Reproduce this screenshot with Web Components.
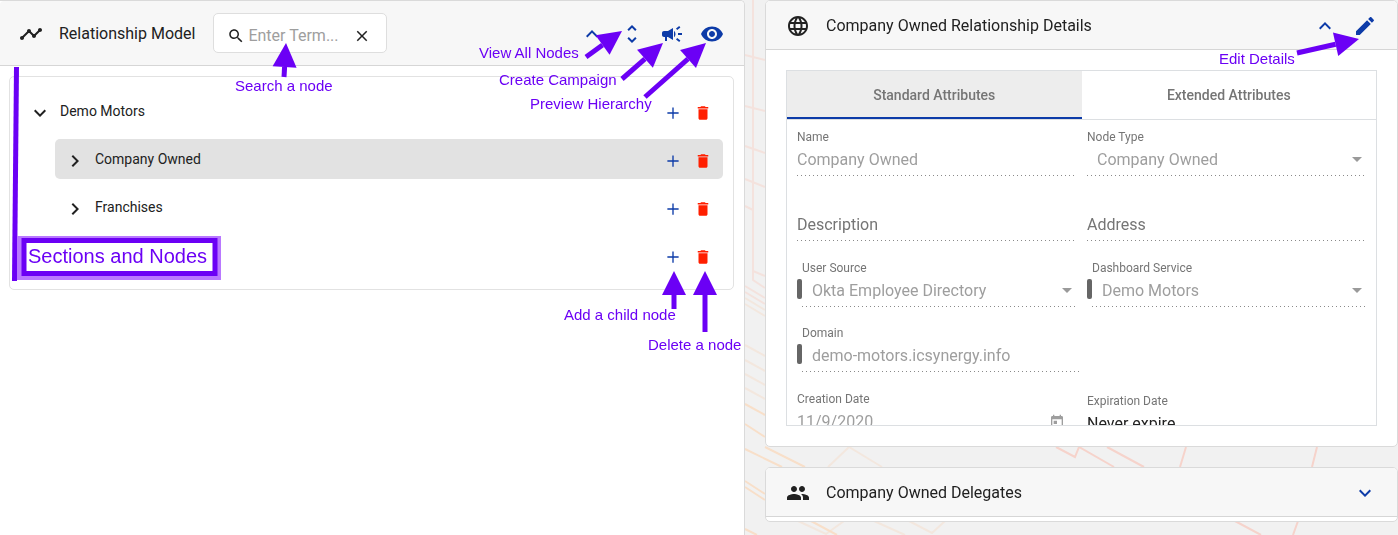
<!DOCTYPE html>
<html lang="en">
<head>
<meta charset="utf-8">
<meta name="viewport" content="width=device-width, initial-scale=1">
<title>Relationship Model</title>
<style>
  html { background: #f1f1f1; }
  body { margin: 0; font-family: Roboto, "Liberation Sans", sans-serif; font-size: 16px; color: #212121; }
</style>
</head>
<body>
<relationship-app></relationship-app>

<script>
const ICONS = {
  timeline: 'M23 8c0 1.1-.9 2-2 2-.18 0-.35-.02-.51-.07l-3.56 3.55c.05.16.07.34.07.52 0 1.1-.9 2-2 2s-2-.9-2-2c0-.18.02-.36.07-.52l-2.55-2.55c-.16.05-.34.07-.52.07s-.36-.02-.52-.07l-4.55 4.56c.05.16.07.33.07.51 0 1.1-.9 2-2 2s-2-.9-2-2 .9-2 2-2c.18 0 .35.02.51.07l4.56-4.55C8.02 9.36 8 9.18 8 9c0-1.1.9-2 2-2s2 .9 2 2c0 .18-.02.36-.07.52l2.55 2.55c.16-.05.34-.07.52-.07s.36.02.52.07l3.55-3.56C19.02 8.35 19 8.18 19 8c0-1.1.9-2 2-2s2 .9 2 2z',
  search: 'M15.5 14h-.79l-.28-.27C15.41 12.59 16 11.11 16 9.5 16 5.91 13.09 3 9.5 3S3 5.91 3 9.5 5.91 16 9.5 16c1.61 0 3.09-.59 4.23-1.57l.27.28v.79l5 4.99L20.49 19l-4.99-5zm-6 0C7.01 14 5 11.99 5 9.5S7.01 5 9.5 5 14 7.01 14 9.5 11.99 14 9.5 14z',
  close: 'M19 6.41L17.59 5 12 10.59 6.41 5 5 6.41 10.59 12 5 17.59 6.41 19 12 13.41 17.59 19 19 17.59 13.41 12z',
  up: 'M12 8l-6 6 1.41 1.41L12 10.83l4.59 4.58L18 14z',
  down: 'M16.59 8.59L12 13.17 7.41 8.59 6 10l6 6 6-6z',
  right: 'M10 6L8.59 7.41 13.17 12l-4.58 4.59L10 18l6-6z',
  unfold: 'M12 5.83L15.17 9l1.41-1.41L12 3 7.41 7.59 8.83 9 12 5.83zm0 12.34L8.83 15l-1.41 1.41L12 21l4.59-4.59L15.17 15 12 18.17z',
  campaign: 'M18 11v2h4v-2h-4zm-2 6.61c.96.71 2.21 1.65 3.2 2.39.4-.53.8-1.07 1.2-1.6-.99-.74-2.24-1.68-3.2-2.4-.4.54-.8 1.08-1.2 1.61zM20.4 5.6c-.4-.53-.8-1.07-1.2-1.6-.99.74-2.24 1.68-3.2 2.4.4.53.8 1.07 1.2 1.6.96-.72 2.21-1.65 3.2-2.4zM4 9c-1.1 0-2 .9-2 2v2c0 1.1.9 2 2 2h1v4h2v-4h1l5 3V6L8 9H4zm11.5 3c0-1.33-.58-2.53-1.5-3.35v6.69c.92-.81 1.5-2.01 1.5-3.34z',
  eye: 'M12 4.5C7 4.5 2.73 7.61 1 12c1.73 4.39 6 7.5 11 7.5s9.27-3.11 11-7.5c-1.73-4.39-6-7.5-11-7.5zM12 17c-2.76 0-5-2.24-5-5s2.24-5 5-5 5 2.24 5 5-2.24 5-5 5zm0-8c-1.66 0-3 1.34-3 3s1.34 3 3 3 3-1.34 3-3-1.34-3-3-3z',
  pencil: 'M3 17.25V21h3.75L17.81 9.94l-3.75-3.75L3 17.25zM20.71 7.04c.39-.39.39-1.02 0-1.41l-2.34-2.34c-.39-.39-1.02-.39-1.41 0l-1.83 1.83 3.75 3.75 1.83-1.83z',
  globe: 'M11.99 2C6.47 2 2 6.48 2 12s4.47 10 9.99 10C17.52 22 22 17.52 22 12S17.52 2 11.99 2zm6.93 6h-2.95c-.32-1.25-.78-2.45-1.38-3.56 1.84.63 3.37 1.91 4.33 3.56zM12 4.04c.83 1.2 1.48 2.53 1.91 3.96h-3.82c.43-1.43 1.08-2.76 1.91-3.96zM4.26 14C4.1 13.36 4 12.69 4 12s.1-1.36.26-2h3.38c-.08.66-.14 1.32-.14 2 0 .68.06 1.34.14 2H4.26zm.82 2h2.95c.32 1.25.78 2.45 1.38 3.56-1.84-.63-3.37-1.9-4.33-3.56zm2.95-8H5.08c.96-1.66 2.49-2.93 4.33-3.56C8.81 5.55 8.35 6.75 8.03 8zM12 19.96c-.83-1.2-1.48-2.53-1.91-3.96h3.82c-.43 1.43-1.08 2.76-1.91 3.96zM14.34 14H9.66c-.09-.66-.16-1.32-.16-2 0-.68.07-1.35.16-2h4.68c.09.65.16 1.32.16 2 0 .68-.07 1.34-.16 2zm.25 5.56c.6-1.11 1.06-2.31 1.38-3.56h2.95c-.96 1.65-2.49 2.93-4.33 3.56zM16.36 14c.08-.66.14-1.32.14-2 0-.68-.06-1.34-.14-2h3.38c.16.64.26 1.31.26 2s-.1 1.36-.26 2h-3.38z',
  group: 'M16 11c1.66 0 2.99-1.34 2.99-3S17.66 5 16 5c-1.66 0-3 1.34-3 3s1.34 3 3 3zm-8 0c1.66 0 2.99-1.34 2.99-3S9.66 5 8 5C6.34 5 5 6.34 5 8s1.34 3 3 3zm0 2c-2.33 0-7 1.17-7 3.5V19h14v-2.5c0-2.33-4.67-3.5-7-3.5zm8 0c-.29 0-.62.02-.97.05 1.16.84 1.97 1.97 1.97 3.45V19h6v-2.5c0-2.33-4.67-3.5-7-3.5z',
  trash: 'M6 19c0 1.1.9 2 2 2h8c1.1 0 2-.9 2-2V7H6v12zM19 4h-3.5l-1-1h-5l-1 1H5v2h14V4z',
  plus: 'M19.5 12.9h-6.6v6.6h-1.8v-6.6H4.5v-1.8h6.6V4.5h1.8v6.6h6.6z',
  calendar: 'M19 3h-1V1h-2v2H8V1H6v2H5c-1.11 0-1.99.9-1.99 2L3 19c0 1.1.89 2 2 2h14c1.1 0 2-.9 2-2V5c0-1.1-.9-2-2-2zm0 16H5V8h14v11zM7 10h5v5H7z'
};

/* Gives every element an open shadow root filled from its own markup. */
class Base extends HTMLElement {
  connectedCallback() {
    if (this.shadowRoot) return;
    const t = document.createElement('template');
    t.innerHTML = `<style>*{box-sizing:border-box}</style>` + this.render();
    this.attachShadow({ mode: 'open' }).append(t.content.cloneNode(true));
  }
  attr(name, fallback = '') { return this.getAttribute(name) ?? fallback; }
}

customElements.define('ui-icon', class extends Base {
  render() {
    return `<style>
      :host { display: block; flex: none; width: var(--icon-size, 24px); height: var(--icon-size, 24px); }
      svg { display: block; width: 100%; height: 100%; fill: currentColor; }
    </style><svg viewBox="0 0 24 24" aria-hidden="true"><path d="${ICONS[this.attr('name')]}"/></svg>`;
  }
});

customElements.define('icon-button', class extends Base {
  render() {
    return `<style>
      :host { display: block; flex: none; color: #0d3ba8; }
      button { display: block; padding: 0; border: 0; background: none; color: inherit; cursor: pointer; }
    </style><button type="button" aria-label="${this.attr('label')}"><ui-icon name="${this.attr('icon')}"></ui-icon></button>`;
  }
});

customElements.define('panel-card', class extends Base {
  render() {
    return `<style>
      :host { display: flex; flex-direction: column; position: relative; background: #fff; border: 1px solid #dadada; border-radius: 5px; }
      header { display: flex; align-items: center; height: var(--header-height, 49px); padding: 2px 20px 0 var(--header-start, 20px); background: #f7f7f7; border-bottom: 1px solid #d6d6d6; border-radius: 4px 4px 0 0; }
      h2 { margin: 0 16px; font-size: 16px; line-height: 24px; font-weight: 400; white-space: nowrap; }
      .actions { display: flex; align-items: center; gap: 16px; margin-left: auto; }
    </style>
    <header>
      <ui-icon name="${this.attr('icon')}"></ui-icon>
      <h2>${this.attr('heading')}</h2>
      <slot name="tools"></slot>
      <div class="actions"><slot name="actions"></slot></div>
    </header>
    <slot></slot>`;
  }
});

customElements.define('search-box', class extends Base {
  render() {
    return `<style>
      :host { display: flex; align-items: center; width: 174px; height: 40px; margin: 0 0 2px 2px; padding: 5px 15px 0 13px; background: #fff; border: 1px solid #dedede; border-radius: 5px; --icon-size: 18px; }
      input { flex: 1; min-width: 0; margin: 0 0 0 3px; padding: 0; border: 0; outline: 0; background: none; font: inherit; line-height: 24px; color: #212121; }
      input::placeholder { color: #9e9e9e; opacity: 1; }
      icon-button { color: #212121; }
    </style>
    <ui-icon name="search"></ui-icon>
    <input type="text" aria-label="Search term" placeholder="Enter Term...">
    <icon-button icon="close" label="Clear search"></icon-button>`;
  }
});

customElements.define('tree-node', class extends Base {
  render() {
    const chevron = this.attr('chevron');
    return `<style>
      :host { display: flex; align-items: center; gap: 8px; height: 40px; padding: 0 11px 0 8px; border-radius: 5px; font-size: 14px; line-height: 20px; }
      :host([child]) { margin-left: 35px; }
      :host([selected]) { background: #e2e2e2; }
      .toggle { color: #212121; padding-top: 3px; }
      .actions { display: flex; gap: 12px; margin-left: auto; padding-top: 4px; --icon-size: 18px; }
      .delete { color: #ff1f00; }
    </style>
    ${chevron ? `<icon-button class="toggle" icon="${chevron}" label="Toggle"></icon-button>` : ''}
    <span><slot></slot></span>
    <div class="actions">
      <icon-button icon="plus" label="Add a child"></icon-button>
      <icon-button class="delete" icon="trash" label="Delete"></icon-button>
    </div>`;
  }
});

customElements.define('node-tree', class extends Base {
  render() {
    return `<style>
      :host { display: flex; flex-direction: column; gap: 8px; margin: 10px 10px 0 9px; padding: 14px 10px; border: 1px solid #e2e2e2; border-radius: 5px; }
    </style><slot></slot>`;
  }
});

customElements.define('tab-bar', class extends Base {
  render() {
    return `<style>
      :host { display: grid; grid-template-columns: 1fr 1fr; height: 49px; border-bottom: 1px solid #dcdfe2; }
      button { margin: 0; padding: 2px 0 0; border: 0; border-bottom: 2px solid transparent; background: none; color: #757575; font: 500 14px/20px Roboto, sans-serif; }
      button[aria-selected=true] { background: #ededed; border-bottom-color: #0d3ba8; }
    </style>
    <button type="button" role="tab" aria-selected="true">Standard Attributes</button>
    <button type="button" role="tab" aria-selected="false">Extended Attributes</button>`;
  }
});

customElements.define('form-field', class extends Base {
  render() {
    const kind = this.attr('kind', 'text'), label = this.attr('label'), value = this.attr('value');
    const floating = kind === 'empty';
    let control;
    if (kind === 'select') control = `<select id="c" disabled><option>${value}</option></select><i class="arrow"></i>`;
    else if (floating) control = `<input id="c" type="text" placeholder="${label}" aria-label="${label}" disabled>`;
    else control = `<input id="c" type="text" value="${value}" disabled>`;
    if (kind === 'date') control += `<ui-icon name="calendar"></ui-icon>`;
    return `<style>
      :host { display: flex; min-width: 0; }
      .mark { flex: none; width: 5px; height: 20px; margin-top: 19px; border-radius: 2px; background: #666; }
      .body { flex: 1; min-width: 0; }
      label { display: block; height: 16px; font-size: 12px; line-height: 16px; color: #757575; white-space: nowrap; }
      .line { display: flex; align-items: center; height: 31px; padding: 0 3px 2px 0;
        background: repeating-linear-gradient(90deg, #8a8a8a 0 1px, transparent 1px 4px) left bottom / 100% 1px no-repeat; }
      input, select { flex: 1; min-width: 0; height: 28px; margin: 0; padding: 0; border: 0; background: none; appearance: none; font: inherit; color: #9e9e9e; opacity: 1; }
      input::placeholder { color: #757575; opacity: 1; }
      select { padding-left: 10px; }
      :host([marked]) input { padding-left: 10px; }
      :host([active]) input { color: #212121; }
      .arrow { flex: none; border: 5px solid transparent; border-top-color: #9a9a9a; border-bottom: 0; }
      ui-icon { color: #9e9e9e; --icon-size: 16px; margin-right: 7px; }
    </style>
    ${this.hasAttribute('marked') ? '<span class="mark"></span>' : ''}
    <div class="body">
      ${floating ? '<label for="c" aria-hidden="true"></label>' : `<label for="c">${label}</label>`}
      <div class="line">${control}</div>
    </div>`;
  }
});

customElements.define('detail-form', class extends Base {
  render() {
    return `<style>
      :host { display: block; height: 356px; margin: 20px; border: 1px solid #dcdfe2; overflow: hidden; }
      form { display: grid; grid-template-columns: minmax(0, 1fr) minmax(0, 1fr); column-gap: 12px; row-gap: 18px; padding: 9px 11px 0 10px; }
      .domain { grid-column: 1; margin-right: -6px; }
      .created { grid-column: 1; }
      .lower { margin-top: 1px; }
      .expires { margin-top: 3px; }
    </style>
    <tab-bar></tab-bar>
    <form>
      <form-field label="Name" value="Company Owned"></form-field>
      <form-field kind="select" label="Node Type" value="Company Owned"></form-field>
      <form-field kind="empty" label="Description"></form-field>
      <form-field kind="empty" label="Address"></form-field>
      <form-field class="lower" kind="select" marked label="User Source" value="Okta Employee Directory"></form-field>
      <form-field class="lower" kind="select" marked label="Dashboard Service" value="Demo Motors"></form-field>
      <form-field class="domain" marked label="Domain" value="demo-motors.icsynergy.info"></form-field>
      <form-field class="created lower" kind="date" label="Creation Date" value="11/9/2020"></form-field>
      <form-field class="expires" active label="Expiration Date" value="Never expire"></form-field>
    </form>`;
  }
});

/* Purple callouts drawn over a panel, anchored to its left or right edge. */
const arrow = (x1, y1, x2, y2) => {
  const d = Math.hypot(x2 - x1, y2 - y1), ux = (x2 - x1) / d, uy = (y2 - y1) / d;
  const bx = x2 - ux * 24, by = y2 - uy * 24, w = 12;
  return `<path d="M${x1} ${y1}L${bx} ${by}" stroke-width="5"/><path class="head" d="M${x2} ${y2}L${bx - uy * w} ${by + ux * w}L${bx + uy * w} ${by - ux * w}z"/>`;
};
const NOTES = {
  search: { w: 745, h: 300, x: 0, art:
    `<path d="M16.5 67L14.5 281" stroke-width="5"/>
     <path d="M19.5 238.5H218.5V277.500H19.5z" stroke="#b978ff" stroke-width="5" fill="#fff"/>
     <path d="M24 240.500H215V273.500H24z" stroke-width="5" fill="#fff"/>
     <text class="big" x="28" y="263">Sections and Nodes</text>
     ${arrow(284, 77, 286, 43)}<text x="235" y="91">Search a node</text>` },
  nodes: { w: 745, h: 360, x: 0, art:
    `${arrow(586, 57, 622, 31)}${arrow(622, 79, 663, 43)}${arrow(645, 97, 706, 43)}${arrow(674, 309, 674, 271)}${arrow(705, 332, 705, 271)}
     <text x="479" y="58">View All Nodes</text><text x="499" y="85">Create Campaign</text><text x="530" y="109">Preview Hierarchy</text>
     <text x="564" y="320">Add a child node</text><text x="648" y="350">Delete a node</text>` },
  edit: { w: 633, h: 90, x: 765, art: `${arrow(1297, 53, 1359, 39)}<text x="1219" y="64">Edit Details</text>` }
};
customElements.define('callout-notes', class extends Base {
  render() {
    const n = NOTES[this.attr('set')];
    const edge = this.attr('side') === 'left' ? 'left: 0' : 'right: -1px';
    return `<style>
      :host { display: block; position: absolute; top: -1px; ${edge}; z-index: 2; pointer-events: none; }
      svg { display: block; stroke: #6b00f5; fill: none; overflow: visible; }
      .head { fill: #6b00f5; stroke: none; }
      text { font: 15px "Liberation Sans", Arial, sans-serif; fill: #6b00f5; stroke: none; }
      .big { font-size: 20px; }
    </style><svg width="${n.w}" height="${n.h}" viewBox="${n.x} 0 ${n.w} ${n.h}">${n.art}</svg>`;
  }
});

customElements.define('page-backdrop', class extends Base {
  render() {
    return `<style>
      :host { display: block; position: fixed; inset: 0; z-index: -1; background: #f1f1f1; }
      svg { display: block; width: 100%; height: 100%; fill: none; stroke-width: 2; }
    </style>
    <svg viewBox="0 0 1398 535" preserveAspectRatio="xMinYMin slice" aria-hidden="true">
      <g stroke="#f4e2dd"><path d="M753 0V280L765 288M745 55L765 60M745 106L765 111M745 146L765 153M745 179L765 187M745 206L753 210M753 271L765 276M745 286L765 298M745 292L765 304"/></g>
      <g stroke="#f3e7de"><path d="M745 298L765 310M745 304L765 316M745 345L765 356M745 360L765 371M745 374L765 385M745 388L765 399M828 467L849 447L882 467M798 521L826 534L844 521M909 521L932 533L945 521M874 521L905 535"/></g>
      <g stroke="#f8dfc9"><path d="M745 404L765 415M745 424L765 437M745 449L782 467M765 447L805 467M745 481L765 494M745 487L765 500M811 521L837 535M745 529L757 535"/></g>
      <g stroke="#f6d3cb"><path d="M1056 447L1075 457L1079 447L1114 467M1107 447L1144 467M1186 447L1180 467M1317 447L1312 467M1235 521L1261 535M1298 521L1293 535"/></g>
    </svg>`;
  }
});

customElements.define('relationship-app', class extends Base {
  render() {
    return `<style>
      :host { display: grid; grid-template-columns: minmax(0, 745fr) minmax(0, 633fr); column-gap: 20px; min-height: 100vh; }
      .model { --header-height: 65px; --header-start: 19px; border-left: 0; border-bottom: 0; border-radius: 0 5px 0 0; }
      .details { display: flex; flex-direction: column; gap: 20px; }
      .strip { height: 4px; }
    </style>
    <page-backdrop></page-backdrop>
    <panel-card class="model" icon="timeline" heading="Relationship Model">
      <search-box slot="tools"></search-box>
      <icon-button slot="actions" icon="up" label="Collapse"></icon-button>
      <icon-button slot="actions" icon="unfold" label="View all nodes"></icon-button>
      <icon-button slot="actions" icon="campaign" label="Create campaign"></icon-button>
      <icon-button slot="actions" icon="eye" label="Preview hierarchy"></icon-button>
      <node-tree>
        <tree-node chevron="down">Demo Motors</tree-node>
        <tree-node child selected chevron="right">Company Owned</tree-node>
        <tree-node child chevron="right">Franchises</tree-node>
        <tree-node></tree-node>
      </node-tree>
      <callout-notes set="search" side="left"></callout-notes>
      <callout-notes set="nodes"></callout-notes>
    </panel-card>
    <div class="details">
      <panel-card icon="globe" heading="Company Owned Relationship Details">
        <icon-button slot="actions" icon="up" label="Collapse"></icon-button>
        <icon-button slot="actions" icon="pencil" label="Edit details"></icon-button>
        <detail-form></detail-form>
        <callout-notes set="edit"></callout-notes>
      </panel-card>
      <panel-card icon="group" heading="Company Owned Delegates">
        <icon-button slot="actions" icon="down" label="Expand"></icon-button>
        <div class="strip"></div>
      </panel-card>
    </div>`;
  }
});
</script>
</body>
</html>
